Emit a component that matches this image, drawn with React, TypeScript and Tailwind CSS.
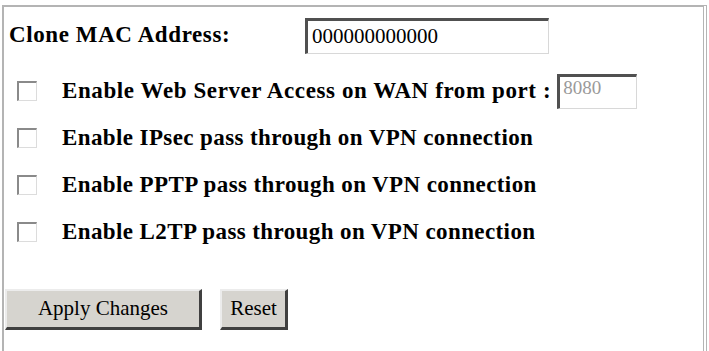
import React from 'react'

const rows = [
	"Enable IPsec pass through on VPN connection",
	"Enable PPTP pass through on VPN connection",
	"Enable L2TP pass through on VPN connection",
]

const Check = () => (
	<span className="block w-[20px] h-[20px] shrink-0 bg-white border-t-2 border-l-2 border-t-[#8a8a8a] border-l-[#8a8a8a] border-b border-r border-b-[#dcdcdc] border-r-[#dcdcdc]"></span>
)

const App = () => {
	return (
		<div className="w-[709px] h-[351px] bg-white pt-[5px] pl-[2px] font-['Liberation_Serif',serif] text-black">
			<div className="w-[705px] h-[346px] border-t-2 border-l-2 border-r-4 border-double border-[#b4b4b4]">
				<div className="flex items-center h-[37px] mt-[10px]">
					<span className="ml-[5px] w-[296px] text-[23px] font-bold tracking-[0.6px]">Clone MAC Address:</span>
					<div className="w-[244px] h-[36px] flex items-center pl-[4px] border-t-[3px] border-l-[3px] border-t-[#505050] border-l-[#505050] border-b border-r border-b-[#d8d8d8] border-r-[#d8d8d8] text-[21px] leading-none">
						000000000000
					</div>
				</div>
				<div className="flex items-center h-[36px] mt-[19px]">
					<div className="ml-[13px] w-[45px]"><Check /></div>
					<span className="text-[23px] font-bold tracking-[0.6px] mr-[6px]">Enable Web Server Access on WAN from port :</span>
					<div className="w-[80px] h-[35px] pl-[3px] pt-[1px] border-t-[3px] border-l-[3px] border-t-[#505050] border-l-[#505050] border-b border-r border-b-[#d8d8d8] border-r-[#d8d8d8] text-[19px] leading-none text-[#9a9a9a]">
						8080
					</div>
				</div>
				{rows.map((r) => (
					<div key={r} className="flex items-center h-[36px] mt-[11px]">
						<div className="ml-[13px] w-[45px]"><Check /></div>
						<span className="text-[23px] font-bold tracking-[0.4px]">{r}</span>
					</div>
				))}
				<div className="flex items-center gap-[18px] mt-[39px] ml-[1px]">
					<button className="w-[197px] h-[41px] bg-[#d6d4cf] border-t-2 border-l-2 border-t-[#ececec] border-l-[#ececec] border-b-[3px] border-r-[3px] border-b-[#404040] border-r-[#404040] text-[21px]">
						Apply Changes
					</button>
					<button className="w-[68px] h-[41px] bg-[#d6d4cf] border-t-2 border-l-2 border-t-[#ececec] border-l-[#ececec] border-b-[3px] border-r-[3px] border-b-[#404040] border-r-[#404040] text-[21px]">
						Reset
					</button>
				</div>
			</div>
		</div>
	)
}

export default App
